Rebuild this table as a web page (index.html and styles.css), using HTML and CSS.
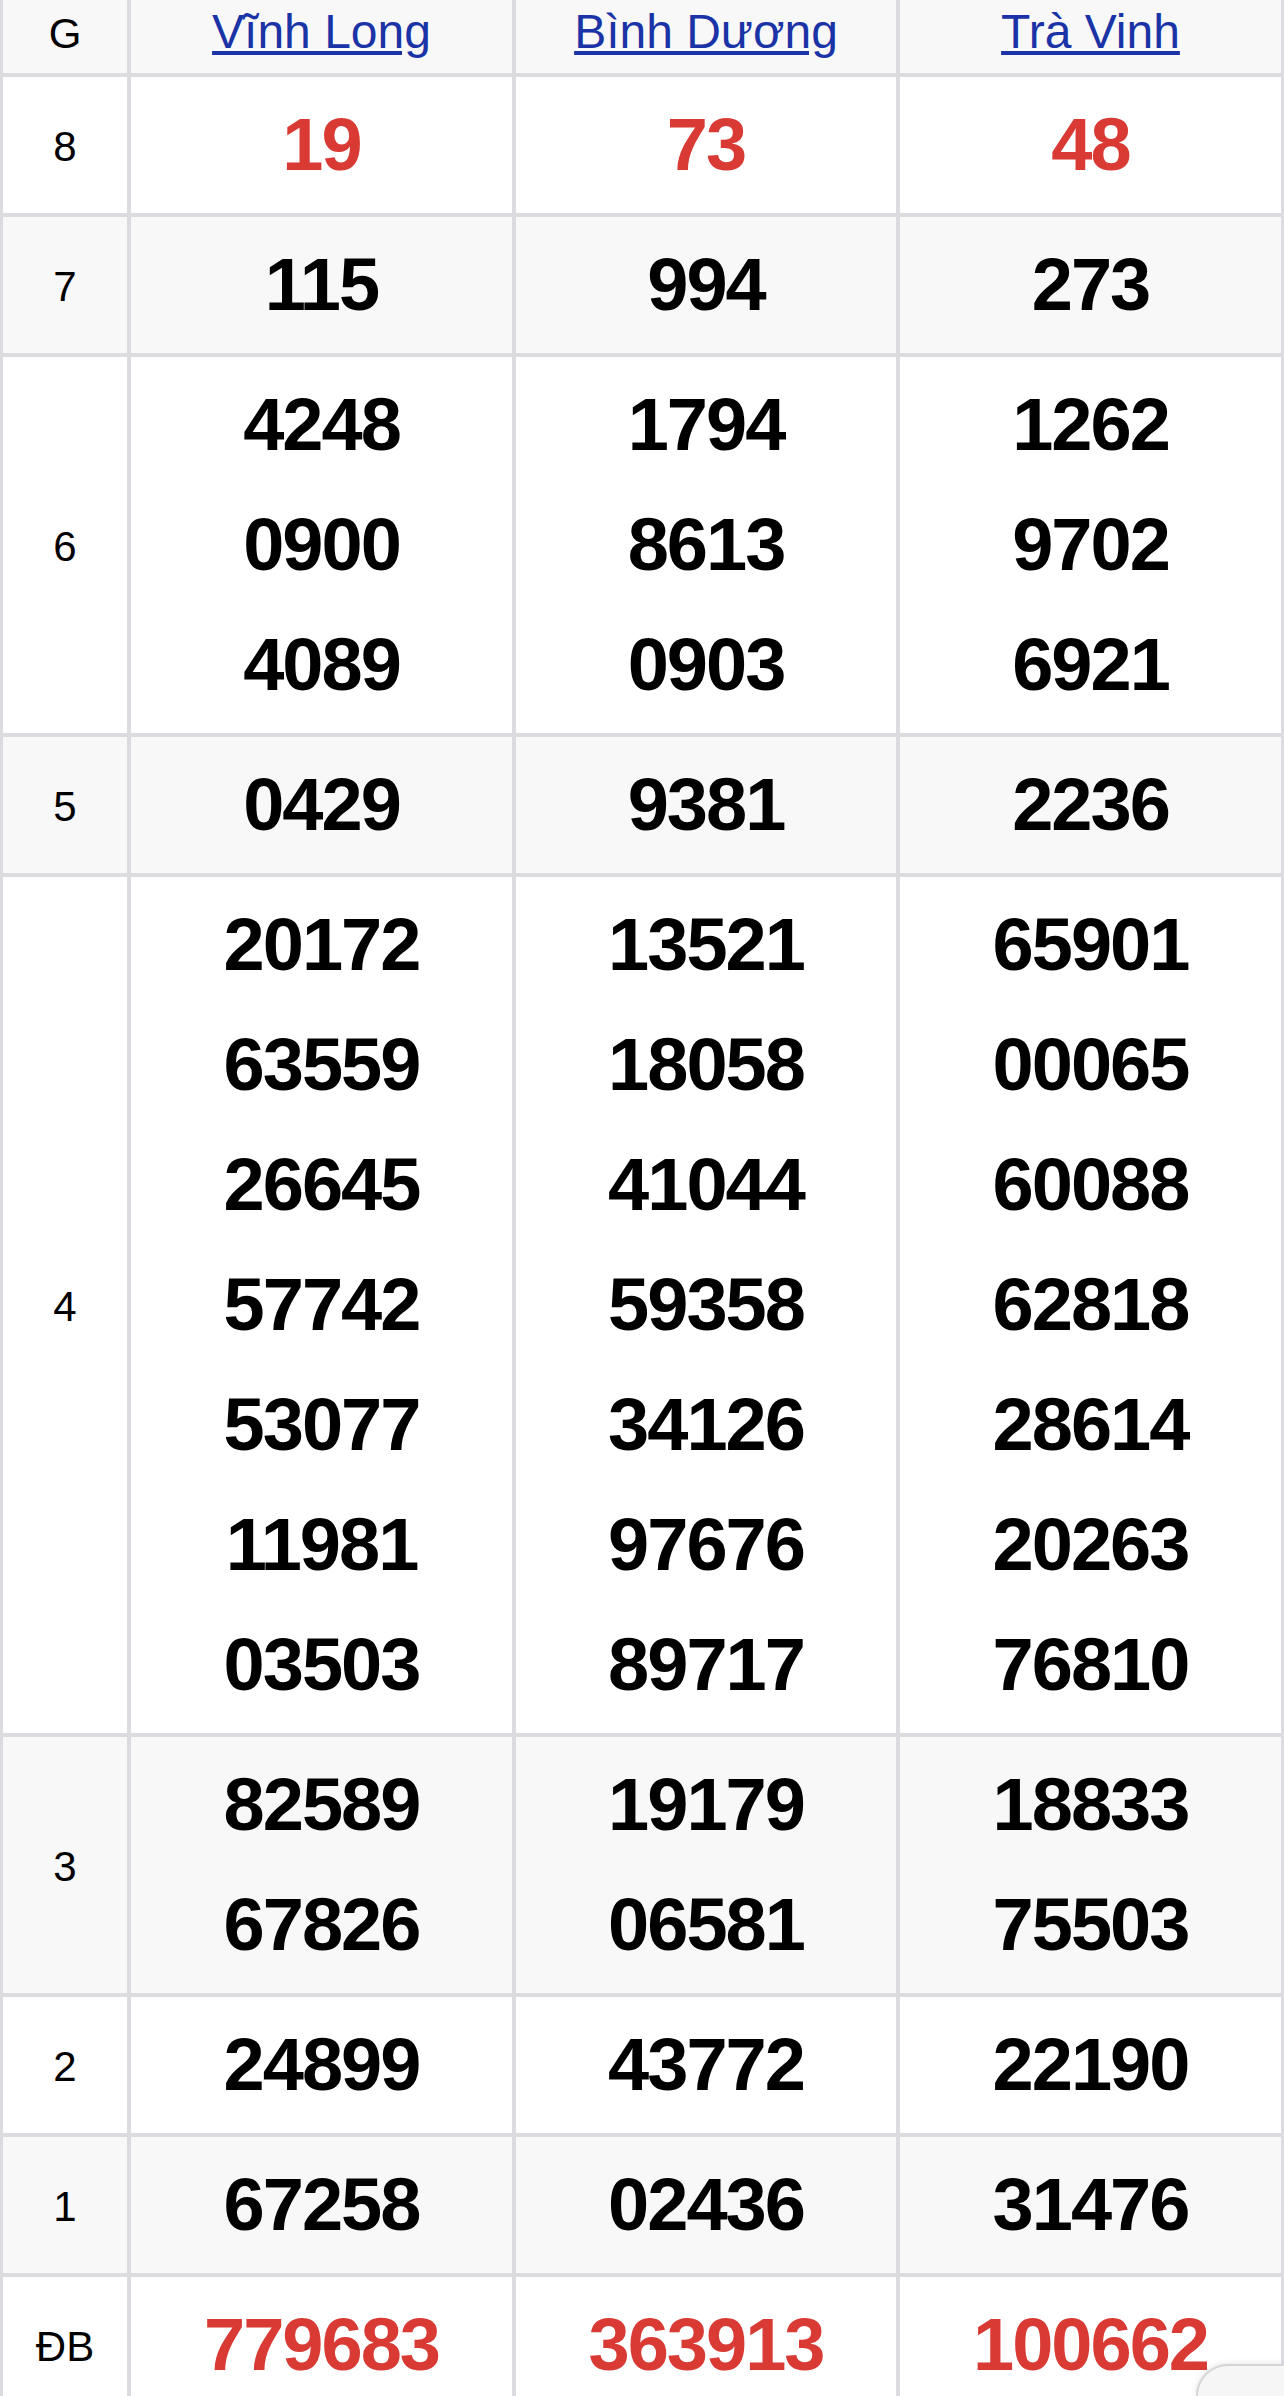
FILE: index.html
```html
<!DOCTYPE html>
<html lang="vi">
<head>
<meta charset="utf-8">
<title>Kết quả xổ số</title>
<link rel="stylesheet" href="styles.css">
</head>
<body>
<div class="results">
  <div class="row head">
    <div class="cell label">G</div>
    <div class="cell prov"><a href="#">Vĩnh Long</a></div>
    <div class="cell prov"><a href="#">Bình Dương</a></div>
    <div class="cell prov"><a href="#">Trà Vinh</a></div>
  </div>
  <div class="row">
    <div class="cell label">8</div>
    <div class="cell num red">19</div>
    <div class="cell num red">73</div>
    <div class="cell num red">48</div>
  </div>
  <div class="row alt">
    <div class="cell label">7</div>
    <div class="cell num">115</div>
    <div class="cell num">994</div>
    <div class="cell num">273</div>
  </div>
  <div class="row">
    <div class="cell label">6</div>
    <div class="cell num"><span>4248</span><span>0900</span><span>4089</span></div>
    <div class="cell num"><span>1794</span><span>8613</span><span>0903</span></div>
    <div class="cell num"><span>1262</span><span>9702</span><span>6921</span></div>
  </div>
  <div class="row alt">
    <div class="cell label">5</div>
    <div class="cell num">0429</div>
    <div class="cell num">9381</div>
    <div class="cell num">2236</div>
  </div>
  <div class="row">
    <div class="cell label">4</div>
    <div class="cell num"><span>20172</span><span>63559</span><span>26645</span><span>57742</span><span>53077</span><span>11981</span><span>03503</span></div>
    <div class="cell num"><span>13521</span><span>18058</span><span>41044</span><span>59358</span><span>34126</span><span>97676</span><span>89717</span></div>
    <div class="cell num"><span>65901</span><span>00065</span><span>60088</span><span>62818</span><span>28614</span><span>20263</span><span>76810</span></div>
  </div>
  <div class="row alt">
    <div class="cell label">3</div>
    <div class="cell num"><span>82589</span><span>67826</span></div>
    <div class="cell num"><span>19179</span><span>06581</span></div>
    <div class="cell num"><span>18833</span><span>75503</span></div>
  </div>
  <div class="row">
    <div class="cell label">2</div>
    <div class="cell num">24899</div>
    <div class="cell num">43772</div>
    <div class="cell num">22190</div>
  </div>
  <div class="row alt">
    <div class="cell label">1</div>
    <div class="cell num">67258</div>
    <div class="cell num">02436</div>
    <div class="cell num">31476</div>
  </div>
  <div class="row">
    <div class="cell label">ĐB</div>
    <div class="cell num red">779683</div>
    <div class="cell num red">363913</div>
    <div class="cell num red">100662</div>
  </div>
</div>
<div class="float-btn"></div>
</body>
</html>
```

FILE: styles.css
```css
html {
  overflow: hidden;
}
body {
  margin: 0;
  position: relative;
  height: 2396px;
  overflow: hidden;
  background: #ffffff;
  font-family: "Liberation Sans", Arial, sans-serif;
  color: #000;
}
.results {
  display: grid;
  grid-template-columns: 124px 381px 380px 381px;
  gap: 4px;
  padding: 0 3px;
  background: #dcdce0;
}
.row {
  display: contents;
}
.cell {
  background: #ffffff;
  display: flex;
  flex-direction: column;
  align-items: center;
  justify-content: center;
  padding: 8px 0;
  text-align: center;
}
.row.alt > .cell,
.row.head > .cell {
  background: #f8f8f8;
}
.label {
  font-size: 42px;
  line-height: 50px;
  padding-top: 11px;
}
.num {
  font-size: 74px;
  font-weight: bold;
  line-height: 120px;
  letter-spacing: -2px;
}
.num span {
  display: block;
}
.red {
  color: #d93a34;
}
.head > .cell {
  display: block;
  height: 55px;
  padding: 4px 0 14px;
  line-height: 55px;
}
.head > .label {
  padding-top: 6px;
  padding-bottom: 12px;
}
.prov a {
  font-size: 48px;
  color: #1a33a6;
  text-decoration: underline;
}
.float-btn {
  position: absolute;
  left: 1196px;
  top: 2364px;
  width: 86px;
  height: 30px;
  border-radius: 34px 0 0 0;
  background: #f6f6f6;
  border: 2px solid #d6d6d6;
  border-right: none;
  border-bottom: none;
  box-shadow: 0 0 6px rgba(0, 0, 0, 0.12);
}
```
